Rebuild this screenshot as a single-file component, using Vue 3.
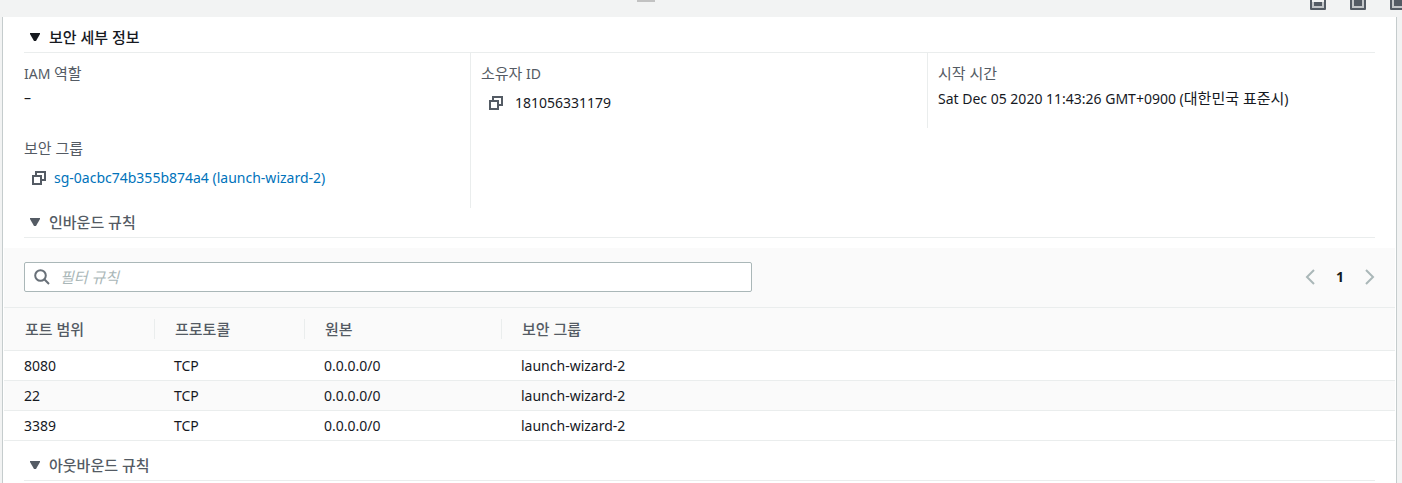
<script setup>
import { ref, computed } from 'vue'

const filter = ref('')
const rules = [
  { port: '8080', protocol: 'TCP', source: '0.0.0.0/0', group: 'launch-wizard-2' },
  { port: '22', protocol: 'TCP', source: '0.0.0.0/0', group: 'launch-wizard-2' },
  { port: '3389', protocol: 'TCP', source: '0.0.0.0/0', group: 'launch-wizard-2' }
]
const visibleRules = computed(() =>
  rules.filter((r) => Object.values(r).some((v) => v.includes(filter.value.trim())))
)
const layouts = [
  { label: '하단 패널', top: 8 },
  { label: '분할 패널', top: 4 },
  { label: '전체 패널', top: 4 }
]
</script>

<template>
  <div class="page">
    <header class="splitter">
      <div class="grip"></div>
      <div class="layouts">
        <button v-for="item in layouts" :key="item.label" type="button" :aria-label="item.label">
          <svg width="16" height="16" viewBox="0 0 16 16">
            <rect x="0" y="0" width="16" height="16" rx="1" fill="#545b64" />
            <rect x="2" y="2" width="12" height="12" fill="#c3c6c9" />
            <rect v-if="item.top > 4" x="2" y="2" width="12" height="6" fill="#f2f3f3" />
            <rect x="4" :y="item.top" width="8" :height="12 - item.top" fill="#545b64" />
          </svg>
        </button>
      </div>
    </header>

    <main class="panel">
      <section>
        <h2 class="heading first">
          <button type="button" aria-expanded="true">
            <svg width="10" height="8" viewBox="0 0 10 8"><path d="M0 0h10v1L6 8H4L0 1z" fill="currentColor" /></svg>
            <span>보안 세부 정보</span>
          </button>
        </h2>
        <div class="details">
          <div class="column">
            <dl>
              <dt>IAM <span lang="ko">역할</span></dt>
              <dd>–</dd>
            </dl>
            <dl>
              <dt><span lang="ko">보안 그룹</span></dt>
              <dd class="copyable">
                <button type="button" aria-label="보안 그룹 복사">
                  <svg width="14" height="14" viewBox="0 0 14 14" fill="none" stroke="#545b64" stroke-width="2">
                    <path d="M1 5h8v8H1zM4 4V1h9v8h-3" />
                  </svg>
                </button>
                <a href="#">sg-0acbc74b355b874a4 (launch-wizard-2)</a>
              </dd>
            </dl>
          </div>
          <div class="column">
            <dl>
              <dt><span lang="ko">소유자</span> ID</dt>
              <dd class="copyable">
                <button type="button" aria-label="소유자 ID 복사">
                  <svg width="14" height="14" viewBox="0 0 14 14" fill="none" stroke="#545b64" stroke-width="2">
                    <path d="M1 5h8v8H1zM4 4V1h9v8h-3" />
                  </svg>
                </button>
                <span class="number">181056331179</span>
              </dd>
            </dl>
          </div>
          <div class="column">
            <dl>
              <dt><span lang="ko">시작 시간</span></dt>
              <dd>Sat Dec 05 2020 11:43:26 GMT+0900 (<span lang="ko">대한민국 표준시</span>)</dd>
            </dl>
          </div>
        </div>
      </section>

      <section>
        <h3 class="heading">
          <button type="button" aria-expanded="true">
            <svg width="10" height="8" viewBox="0 0 10 8"><path d="M0 0h10v1L6 8H4L0 1z" fill="currentColor" /></svg>
            <span>인바운드 규칙</span>
          </button>
        </h3>
        <div class="tools">
          <label class="search">
            <svg width="16" height="16" viewBox="0 0 16 16" fill="none" stroke="#687078" stroke-width="2">
              <circle cx="6.5" cy="6.5" r="5.3" />
              <path d="M10.3 10.3l4.7 4.7" />
            </svg>
            <input v-model="filter" type="text" placeholder="필터 규칙" aria-label="필터 규칙" />
          </label>
          <nav class="pages" aria-label="페이지">
            <button type="button" aria-label="이전">
              <svg width="10" height="16" viewBox="0 0 10 16" fill="none" stroke="#aab7b8" stroke-width="2"><path d="M9 1L2 8l7 7" /></svg>
            </button>
            <button type="button" class="current" aria-current="page">1</button>
            <button type="button" aria-label="다음">
              <svg width="10" height="16" viewBox="0 0 10 16" fill="none" stroke="#aab7b8" stroke-width="2"><path d="M1 1l7 7-7 7" /></svg>
            </button>
          </nav>
        </div>
        <table>
          <colgroup>
            <col class="c-port" />
            <col class="c-protocol" />
            <col class="c-source" />
            <col />
          </colgroup>
          <thead>
            <tr>
              <th scope="col"><div>포트 범위</div></th>
              <th scope="col"><div>프로토콜</div></th>
              <th scope="col"><div>원본</div></th>
              <th scope="col"><div>보안 그룹</div></th>
            </tr>
          </thead>
          <tbody>
            <tr v-for="rule in visibleRules" :key="rule.port">
              <td>{{ rule.port }}</td>
              <td>{{ rule.protocol }}</td>
              <td>{{ rule.source }}</td>
              <td>{{ rule.group }}</td>
            </tr>
          </tbody>
        </table>
      </section>

      <section class="outbound">
        <h3 class="heading">
          <button type="button" aria-expanded="true">
            <svg width="10" height="8" viewBox="0 0 10 8"><path d="M0 0h10v1L6 8H4L0 1z" fill="currentColor" /></svg>
            <span>아웃바운드 규칙</span>
          </button>
        </h3>
      </section>
    </main>
  </div>
</template>

<style>
html,
body {
  background: #f2f3f3;
}
</style>

<style scoped>
.page {
  display: flex;
  flex-direction: column;
  min-height: 100vh;
  overflow: hidden;
  color: #16191f;
  font-family: "Noto Sans", "Noto Sans CJK KR", sans-serif;
  font-size: 14px;
  line-height: 20px;
}
[lang="ko"] {
  font-size: 15px;
}
button {
  display: inline-flex;
  align-items: center;
  margin: 0;
  padding: 0;
  border: 0;
  background: none;
  color: inherit;
  font: inherit;
  cursor: pointer;
}
svg {
  display: block;
  flex: none;
}
.splitter {
  display: flex;
  justify-content: space-between;
  height: 17px;
}
.grip {
  width: 18px;
  height: 2px;
  margin-left: calc(46% - 8px);
  background: #c2c2c2;
}
.layouts {
  display: flex;
  gap: 24px;
  align-items: flex-end;
  height: 10px;
  margin-right: -4px;
}
.panel {
  flex: 1;
  margin: 0 5px 0 2px;
  padding: 6px 1px 0;
  border: solid #c5cccd;
  border-width: 0 1px;
  background: #fff;
}
.heading {
  display: flex;
  height: 29px;
  margin: 0 20px;
  border-bottom: 1px solid #eaeded;
  color: #545b64;
  font-size: 15px;
  font-weight: 500;
}
.heading.first {
  color: #16191f;
}
.heading button {
  gap: 9px;
  padding: 0 0 2px 6px;
}
.details {
  display: grid;
  grid-template-columns: repeat(3, 1fr);
  align-items: start;
  margin: 0 10px;
}
.column {
  min-height: 75px;
  padding: 0 10px;
  box-sizing: border-box;
  border-right: 1px solid #eaeded;
}
.column:first-child {
  height: 155px;
}
.column:last-child {
  border-right: 0;
}
dl {
  margin: 0;
  padding-top: 10px;
  min-height: 65px;
}
dt {
  height: 20px;
  margin-bottom: 5px;
  color: #545b64;
}
dd {
  margin: 0;
}
.copyable {
  display: flex;
  align-items: center;
  gap: 8px;
  height: 30px;
  padding-left: 8px;
}
.number {
  padding-left: 4px;
}
a {
  color: #0073bb;
  text-decoration: none;
}
.tools {
  display: flex;
  align-items: center;
  justify-content: space-between;
  margin-top: 10px;
  padding: 14px 20px 15px;
  background: #fafafa;
}
.search {
  display: flex;
  align-items: center;
  gap: 10px;
  flex: 0 1 728px;
  height: 30px;
  box-sizing: border-box;
  padding: 0 9px;
  border: 1px solid #aab7b8;
  border-radius: 2px;
  background: #fff;
}
.search input {
  flex: 1;
  min-width: 0;
  padding: 0;
  border: 0;
  outline: 0;
  background: none;
  color: #16191f;
  font: inherit;
  font-size: 15px;
}
.search input::placeholder {
  color: #aab7b8;
  font-style: italic;
  opacity: 1;
}
.pages {
  display: flex;
  align-items: center;
}
.pages .current {
  justify-content: center;
  width: 50px;
  font-weight: 700;
  font-size: 14px;
}
table {
  width: 100%;
  table-layout: fixed;
  border-collapse: separate;
  border-spacing: 0;
}
.c-port {
  width: 151px;
}
.c-protocol {
  width: 150px;
}
.c-source {
  width: 197px;
}
th {
  height: 42px;
  padding: 0;
  border: solid #eaeded;
  border-width: 1px 0;
  background: #fafafa;
  color: #545b64;
  font-size: 15px;
  font-weight: 500;
  text-align: left;
}
th div {
  padding-left: 20px;
  border-right: 1px solid #eaeded;
}
th:first-child div {
  padding-left: 21px;
}
th:last-child div {
  border-right: 0;
}
td {
  height: 29px;
  padding: 0 0 0 19px;
  border-bottom: 1px solid #eaeded;
}
td:first-child {
  padding-left: 20px;
}
tbody tr:nth-child(even) td {
  background: #fafafa;
}
.outbound {
  padding-top: 10px;
}
</style>
